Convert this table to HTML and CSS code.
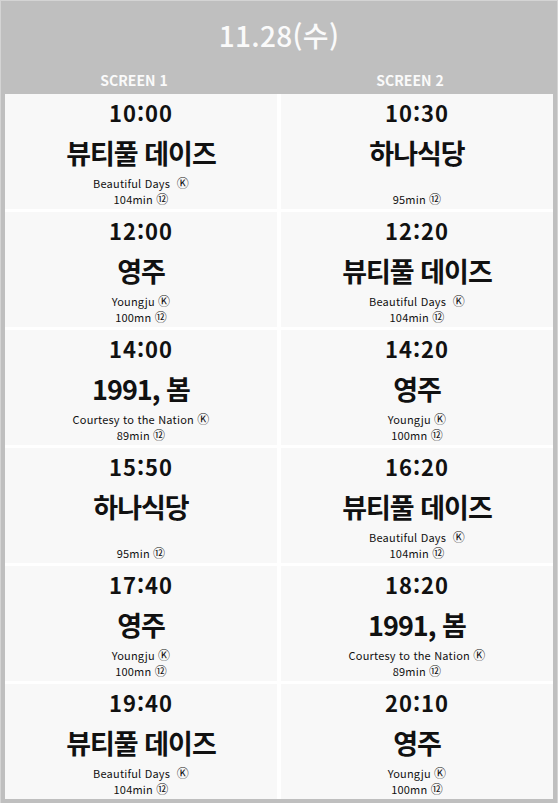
FILE: index.html
```html
<!DOCTYPE html>
<html lang="ko">
<head>
<meta charset="utf-8">
<link rel="stylesheet" href="styles.css">
</head>
<body>
<div class="board">
  <div class="date">11.28(수)</div>
  <div class="screens">
    <div class="screen">SCREEN 1</div>
    <div class="screen">SCREEN 2</div>
  </div>
  <div class="grid">
    <div class="cell"><div class="time">10:00</div><div class="title">뷰티풀 데이즈</div><div class="en">Beautiful Days &nbsp;<span class="mark">Ⓚ</span></div><div class="min">104min <span class="mark">⑫</span></div></div>
    <div class="cell"><div class="time">10:30</div><div class="title">하나식당</div><div class="en"></div><div class="min">95min <span class="mark">⑫</span></div></div>
    <div class="cell"><div class="time">12:00</div><div class="title">영주</div><div class="en">Youngju <span class="mark">Ⓚ</span></div><div class="min">100mn <span class="mark">⑫</span></div></div>
    <div class="cell"><div class="time">12:20</div><div class="title">뷰티풀 데이즈</div><div class="en">Beautiful Days &nbsp;<span class="mark">Ⓚ</span></div><div class="min">104min <span class="mark">⑫</span></div></div>
    <div class="cell"><div class="time">14:00</div><div class="title">1991, 봄</div><div class="en">Courtesy to the Nation <span class="mark">Ⓚ</span></div><div class="min">89min <span class="mark">⑫</span></div></div>
    <div class="cell"><div class="time">14:20</div><div class="title">영주</div><div class="en">Youngju <span class="mark">Ⓚ</span></div><div class="min">100mn <span class="mark">⑫</span></div></div>
    <div class="cell"><div class="time">15:50</div><div class="title">하나식당</div><div class="en"></div><div class="min">95min <span class="mark">⑫</span></div></div>
    <div class="cell"><div class="time">16:20</div><div class="title">뷰티풀 데이즈</div><div class="en">Beautiful Days &nbsp;<span class="mark">Ⓚ</span></div><div class="min">104min <span class="mark">⑫</span></div></div>
    <div class="cell"><div class="time">17:40</div><div class="title">영주</div><div class="en">Youngju <span class="mark">Ⓚ</span></div><div class="min">100mn <span class="mark">⑫</span></div></div>
    <div class="cell"><div class="time">18:20</div><div class="title">1991, 봄</div><div class="en">Courtesy to the Nation <span class="mark">Ⓚ</span></div><div class="min">89min <span class="mark">⑫</span></div></div>
    <div class="cell"><div class="time">19:40</div><div class="title">뷰티풀 데이즈</div><div class="en">Beautiful Days &nbsp;<span class="mark">Ⓚ</span></div><div class="min">104min <span class="mark">⑫</span></div></div>
    <div class="cell"><div class="time">20:10</div><div class="title">영주</div><div class="en">Youngju <span class="mark">Ⓚ</span></div><div class="min">100mn <span class="mark">⑫</span></div></div>
  </div>
</div>
</body>
</html>
```

FILE: styles.css
```css
html, body {
  margin: 0;
  padding: 0;
  background: #ffffff;
}
body {
  font-family: "Noto Sans CJK KR", "Noto Sans", sans-serif;
  color: #111;
}
.board {
  width: 558px;
  background: #bfbfbf;
  border-top: 1px solid #d4d4d4;
  border-left: 1px solid #d4d4d4;
  border-right: 1px solid #d4d4d4;
  padding: 0 4px 4px 4px;
  box-sizing: border-box;
}
.date {
  padding-top: 3px;
  height: 62px;
  line-height: 62px;
  text-align: center;
  color: #fafafa;
  font-size: 28px;
  font-weight: 500;
  letter-spacing: 0.3px;
}
.screens {
  display: grid;
  grid-template-columns: 1fr 1fr;
  column-gap: 4px;
  height: 28px;
  line-height: 28px;
}
.screen {
  text-align: center;
  color: #fafafa;
  font-size: 14px;
  font-weight: 700;
  padding-right: 14px;
}
.grid {
  display: grid;
  grid-template-columns: 1fr 1fr;
  column-gap: 4px;
  row-gap: 3px;
  background: #ffffff;
}
.cell {
  background: #f8f8f8;
  height: 115px;
  display: flex;
  flex-direction: column;
  align-items: center;
}
.time {
  height: 36px;
  line-height: 36px;
  font-size: 22px;
  font-weight: 700;
  letter-spacing: 1px;
}
.title {
  height: 45px;
  line-height: 45px;
  font-size: 27px;
  font-weight: 700;
  letter-spacing: -1px;
}
.en, .min {
  height: 16px;
  line-height: 16px;
  font-size: 11px;
  letter-spacing: 0.2px;
}
.mark {
  display: inline-block;
  font-size: 12px;
  line-height: 14px;
  height: 14px;
  vertical-align: top;
  margin-top: 1px;
}
```
